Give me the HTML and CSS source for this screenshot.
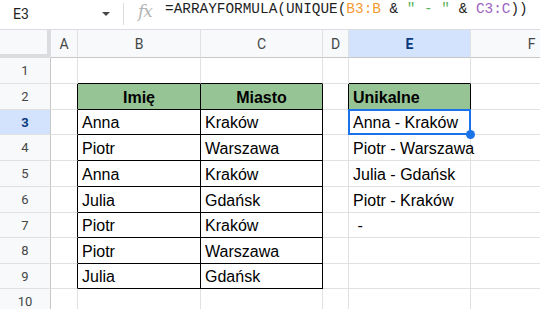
FILE: index.html
```html
<!DOCTYPE html>
<html lang="pl">
<head>
    <meta charset="UTF-8">
    <title>Arkusz</title>
    <link rel="stylesheet" href="styles.css">
</head>
<body>
    <div class="topbar">
        <div class="namebox">E3</div>
        <div class="caret"></div>
        <div class="sep"></div>
        <div class="fx">fx</div>
        <div class="formula">=ARRAYFORMULA(UNIQUE(<span class="ref1">B3:B</span> &amp; <span class="str">" - "</span> &amp; <span class="ref2">C3:C</span>))</div>
    </div>

    <div class="wrap">
    <div class="sheet">
        <!-- naglowki kolumn -->
        <div class="hd corner"></div>
        <div class="hd col">A</div>
        <div class="hd col">B</div>
        <div class="hd col">C</div>
        <div class="hd col">D</div>
        <div class="hd col sel">E</div>
        <div class="hd col">F</div>

        <!-- 1 -->
        <div class="hd row">1</div>
        <div class="c"></div>
        <div class="c tb"></div>
        <div class="c tb"></div>
        <div class="c"></div>
        <div class="c tb"></div>
        <div class="c"></div>

        <!-- 2 -->
        <div class="hd row">2</div>
        <div class="c tl"></div>
        <div class="c t head">Imię</div>
        <div class="c t head">Miasto</div>
        <div class="c tl"></div>
        <div class="c t head left">Unikalne</div>
        <div class="c"></div>

        <!-- 3 -->
        <div class="hd row sel">3</div>
        <div class="c tl"></div>
        <div class="c t">Anna</div>
        <div class="c t">Kraków</div>
        <div class="c"></div>
        <div class="c active">Anna - Kraków</div>
        <div class="c"></div>

        <!-- 4 -->
        <div class="hd row">4</div>
        <div class="c tl"></div>
        <div class="c t">Piotr</div>
        <div class="c t">Warszawa</div>
        <div class="c"></div>
        <div class="c">Piotr - Warszawa</div>
        <div class="c"></div>

        <!-- 5 -->
        <div class="hd row">5</div>
        <div class="c tl"></div>
        <div class="c t">Anna</div>
        <div class="c t">Kraków</div>
        <div class="c"></div>
        <div class="c">Julia - Gdańsk</div>
        <div class="c"></div>

        <!-- 6 -->
        <div class="hd row">6</div>
        <div class="c tl"></div>
        <div class="c t">Julia</div>
        <div class="c t">Gdańsk</div>
        <div class="c"></div>
        <div class="c">Piotr - Kraków</div>
        <div class="c"></div>

        <!-- 7 -->
        <div class="hd row">7</div>
        <div class="c tl"></div>
        <div class="c t">Piotr</div>
        <div class="c t">Kraków</div>
        <div class="c"></div>
        <div class="c"> - </div>
        <div class="c"></div>

        <!-- 8 -->
        <div class="hd row">8</div>
        <div class="c tl"></div>
        <div class="c t">Piotr</div>
        <div class="c t">Warszawa</div>
        <div class="c"></div>
        <div class="c"></div>
        <div class="c"></div>

        <!-- 9 -->
        <div class="hd row">9</div>
        <div class="c tl"></div>
        <div class="c t">Julia</div>
        <div class="c t">Gdańsk</div>
        <div class="c"></div>
        <div class="c"></div>
        <div class="c"></div>

        <!-- 10 -->
        <div class="hd row">10</div>
        <div class="c"></div>
        <div class="c"></div>
        <div class="c"></div>
        <div class="c"></div>
        <div class="c"></div>
        <div class="c"></div>
    </div>
    </div>
</body>
</html>
```

FILE: styles.css
```css
body {
    margin: 0;
    background: #fff;
    font-family: 'Liberation Sans', Arial, sans-serif;
    color: #000;
    width: 540px;
    height: 309px;
    overflow: hidden;
}
.topbar {
    height: 29px;
    border-bottom: 1px solid #dadce0;
    display: flex;
    align-items: flex-start;
    background: #fff;
    overflow: hidden;
}
.namebox {
    font-family: Roboto, sans-serif;
    font-size: 14px;
    color: #1f1f1f;
    padding: 6px 0 0 13px;
    width: 77px;
    flex: none;
}
.caret {
    width: 0;
    height: 0;
    border-left: 4px solid transparent;
    border-right: 4px solid transparent;
    border-top: 4px solid #444746;
    margin: 12px 0 0 12px;
    flex: none;
}
.sep {
    width: 1px;
    height: 22px;
    background: #dadce0;
    margin: 3px 0 0 13px;
    flex: none;
}
.fx {
    font-family: 'DejaVu Serif', serif;
    font-style: italic;
    font-size: 17px;
    color: #b4b4b4;
    margin: 1px 0 0 14px;
    letter-spacing: -1px;
    width: 16px;
    flex: none;
}
.formula {
    font-family: 'Liberation Mono', monospace;
    font-size: 14.4px;
    color: #1f1f1f;
    margin: 1px 0 0 11px;
    white-space: pre;
    flex: none;
}
.ref1 { color: #f29b35; }
.str { color: #5bb35b; }
.ref2 { color: #a064bf; }

.wrap {
    width: 540px;
    overflow: hidden;
}
.sheet {
    display: grid;
    grid-template-columns: 51px 27px 123px 122px 26px 122px 122px;
    grid-template-rows: 28px 26px 26px 25px 26px 26px 26px 25px 26px 25px 26px;
}
.sheet > div {
    box-sizing: border-box;
    border-right: 1px solid #e1e1e1;
    border-bottom: 1px solid #e1e1e1;
}
.hd {
    background: #f8f9fa;
    font-family: Roboto, sans-serif;
    font-size: 13px;
    color: #444746;
    display: flex;
    align-items: center;
    justify-content: center;
}
.sheet > .hd {
    border-color: #c7c7c7;
}
.sheet > .hd.col {
    border-right-color: #e1e1e1;
}
.sheet > .hd.row {
    border-bottom-color: #e1e1e1;
}
.sheet > .hd.corner {
    border-right: 4px solid #dadce0;
    border-bottom: 4px solid #dadce0;
}
.hd.col {
    font-size: 14px;
}
.hd.sel {
    background: #d3e3fd;
    color: #0b3a7e;
    font-weight: bold;
}
.c {
    font-size: 16px;
    line-height: 18px;
    padding: 0 4px 2px 4px;
    display: flex;
    align-items: flex-end;
    white-space: pre;
}
.sheet > .tl {
    border-right-color: #000;
}
.sheet > .tb {
    border-bottom-color: #000;
}
.sheet > .t {
    border-right-color: #000;
    border-bottom-color: #000;
}
.head {
    background: #96c494;
    font-weight: bold;
    justify-content: center;
}
.head.left {
    justify-content: flex-start;
}
.active {
    position: relative;
}
.active::after {
    content: "";
    position: absolute;
    left: -1px;
    top: -1px;
    right: -1px;
    bottom: -1px;
    border: 2px solid #1a73e8;
}
.active::before {
    content: "";
    position: absolute;
    right: -5px;
    bottom: -5px;
    width: 9px;
    height: 9px;
    border-radius: 50%;
    background: #1a73e8;
    z-index: 2;
}
```
